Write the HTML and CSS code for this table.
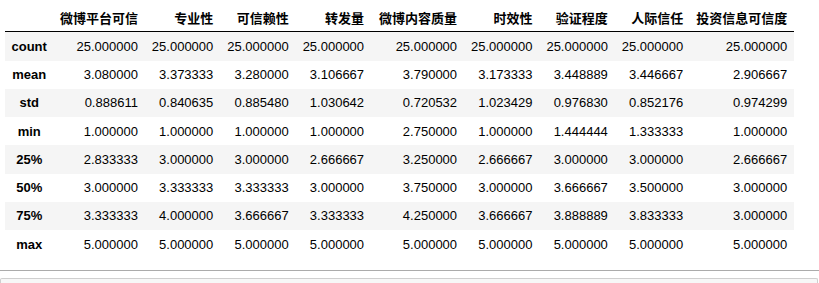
FILE: index.html
```html
<!DOCTYPE html>
<html>
<head>
<meta charset="utf-8">
<link rel="stylesheet" href="styles.css">
</head>
<body>
<div class="output">
<table class="dataframe">
<thead>
<tr><th></th><th>微博平台可信</th><th>专业性</th><th>可信赖性</th><th>转发量</th><th>微博内容质量</th><th>时效性</th><th>验证程度</th><th>人际信任</th><th>投资信息可信度</th></tr>
</thead>
<tbody>
<tr><th>count</th><td>25.000000</td><td>25.000000</td><td>25.000000</td><td>25.000000</td><td>25.000000</td><td>25.000000</td><td>25.000000</td><td>25.000000</td><td>25.000000</td></tr>
<tr><th>mean</th><td>3.080000</td><td>3.373333</td><td>3.280000</td><td>3.106667</td><td>3.790000</td><td>3.173333</td><td>3.448889</td><td>3.446667</td><td>2.906667</td></tr>
<tr><th>std</th><td>0.888611</td><td>0.840635</td><td>0.885480</td><td>1.030642</td><td>0.720532</td><td>1.023429</td><td>0.976830</td><td>0.852176</td><td>0.974299</td></tr>
<tr><th>min</th><td>1.000000</td><td>1.000000</td><td>1.000000</td><td>1.000000</td><td>2.750000</td><td>1.000000</td><td>1.444444</td><td>1.333333</td><td>1.000000</td></tr>
<tr><th>25%</th><td>2.833333</td><td>3.000000</td><td>3.000000</td><td>2.666667</td><td>3.250000</td><td>2.666667</td><td>3.000000</td><td>3.000000</td><td>2.666667</td></tr>
<tr><th>50%</th><td>3.000000</td><td>3.333333</td><td>3.333333</td><td>3.000000</td><td>3.750000</td><td>3.000000</td><td>3.666667</td><td>3.500000</td><td>3.000000</td></tr>
<tr><th>75%</th><td>3.333333</td><td>4.000000</td><td>3.666667</td><td>3.333333</td><td>4.250000</td><td>3.666667</td><td>3.888889</td><td>3.833333</td><td>3.000000</td></tr>
<tr><th>max</th><td>5.000000</td><td>5.000000</td><td>5.000000</td><td>5.000000</td><td>5.000000</td><td>5.000000</td><td>5.000000</td><td>5.000000</td><td>5.000000</td></tr>
</tbody>
</table>
</div>
<div class="cell-divider"></div>
<div class="next-cell"></div>
</body>
</html>
```
FILE: styles.css
```css
html, body {
  margin: 0;
  padding: 0;
  background: #fff;
}
body {
  display: flex;
  flex-direction: column;
  height: 283px;
  overflow: hidden;
  font-family: "Liberation Sans", Arial, "Noto Sans CJK SC", sans-serif;
  color: #000;
}
.output {
  padding: 3px 0 0 5px;
  height: 270px;
  box-sizing: border-box;
  flex: none;
}
.dataframe {
  border-collapse: collapse;
  border-spacing: 0;
  font-size: 13px;
}
.dataframe th,
.dataframe td {
  padding: 6.5px;
  line-height: 15.25px;
  text-align: right;
  vertical-align: middle;
  white-space: nowrap;
}
.dataframe td {
  min-width: 62.4px;
}
.dataframe thead th {
  font-family: "Noto Sans CJK SC", "Liberation Sans", sans-serif;
  font-weight: bold;
  border-bottom: 1px solid #000;
}
.dataframe thead th:nth-child(6) {
  min-width: 80px;
}
.dataframe tbody th {
  font-weight: bold;
  text-align: center;
}
.dataframe tbody tr:nth-child(odd) {
  background: #f5f5f5;
}
.cell-divider {
  height: 1px;
  background: #ababab;
  flex: none;
}
.next-cell {
  margin-top: 7px;
  flex: 1;
  border: 1px solid #cfcfcf;
  border-bottom: none;
  border-radius: 2px 2px 0 0;
  background: #f7f7f7;
  margin-right: 1px;
}
```
